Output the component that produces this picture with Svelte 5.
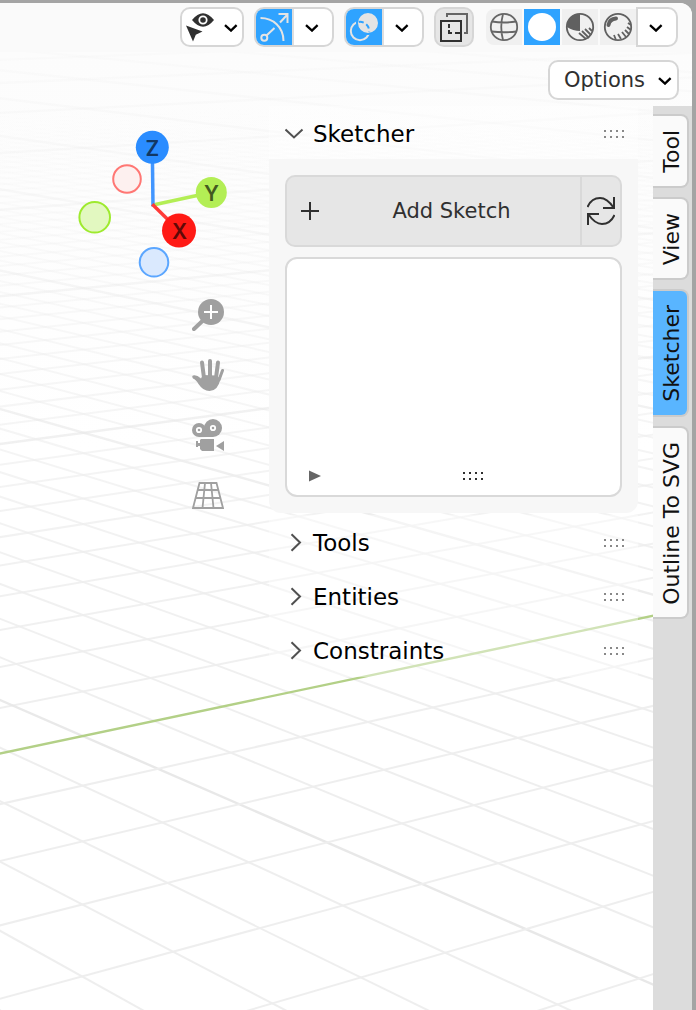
<script>
  // Projects a point of the ground plane (a, b in grid units) to the viewport.
  function project(a, b) {
    const w = 1 - 0.0185 * a - 0.0363 * b;
    return [(82.7 - 74.2 * a + 69.55 * b) / w, (736 + 1.7 * a + 4.9 * b) / w];
  }

  function segment(p, q, major, axis) {
    return { x1: p[0], y1: p[1], x2: q[0], y2: q[1], major, axis };
  }

  const lines = [];
  for (let i = -90; i <= 14; i++) {
    const major = i % 10 === 0;
    lines.push(segment(project(i, -300), project(i, (0.7 - 0.0185 * i) / 0.0363), major, false));
    lines.push(segment(project(-300, i), project((0.7 - 0.0363 * i) / 0.0185, i), major, i === 0));
  }
  lines.sort((m, n) => Number(m.axis) - Number(n.axis));

  let tabs = ['Tool', 'View', 'Sketcher', 'Outline To SVG'];
  let active = $state('Sketcher');
  let open = $state(true);
</script>

{#snippet chevron()}
  <svg class="chevron" width="14" height="8" viewBox="0 0 14 8"><path d="M1 1.2 7 6.600l5.600-5.400" fill="none" stroke="#000" stroke-width="2.300" /></svg>
{/snippet}

{#snippet grip()}
  <svg class="grip" width="20" height="8" viewBox="0 0 20 8">
    {#each [0, 6, 12, 18] as x}
      <path d="M{x} 0h2v2h-2zM{x} 6h2v2h-2z" />
    {/each}
  </svg>
{/snippet}

<div class="editor">
  <svg class="ground" aria-hidden="true">
    <defs>
      <linearGradient id="minor" gradientUnits="userSpaceOnUse" x1="0" y1="50" x2="0" y2="760">
        <stop offset="0.08" stop-color="#eee" stop-opacity="0" />
        <stop offset="0.25" stop-color="#eee" stop-opacity="0.22" />
        <stop offset="0.45" stop-color="#eee" stop-opacity="0.48" />
        <stop offset="0.7" stop-color="#eee" stop-opacity="0.8" />
        <stop offset="1" stop-color="#eee" />
      </linearGradient>
      <linearGradient id="major" gradientUnits="userSpaceOnUse" x1="0" y1="50" x2="0" y2="760">
        <stop offset="0" stop-color="#e8e8e8" stop-opacity="0.1" />
        <stop offset="0.3" stop-color="#e8e8e8" stop-opacity="0.35" />
        <stop offset="0.6" stop-color="#e8e8e8" stop-opacity="0.7" />
        <stop offset="1" stop-color="#e8e8e8" />
      </linearGradient>
    </defs>
    {#each lines as l}
      <line x1={l.x1} y1={l.y1} x2={l.x2} y2={l.y2} stroke={l.axis ? '#b3d087' : l.major ? 'url(#major)' : 'url(#minor)'} stroke-width={l.axis || l.major ? 2.4 : 2} />
    {/each}
  </svg>

  <header class="toolbar">
    <button class="box visibility" aria-label="Object types visibility">
      <svg width="32" height="32" viewBox="0 0 32 32">
        <path d="M8 9Q19-4.500 30 9 19 22.500 8 9z" fill="#303030" />
        <circle cx="19" cy="9" r="3.700" fill="#303030" stroke="#fff" stroke-width="1.800" />
        <circle cx="19" cy="9" r="1.200" fill="#303030" />
        <path d="M2 14.500 18.500 20.500 11.800 23.800 9 30.500z" fill="#303030" />
      </svg>
      {@render chevron()}
    </button>

    <div class="box split">
      <button class="cell on" aria-label="Show gizmos">
        <svg width="36" height="36" viewBox="0 0 36 36" fill="none" stroke="#e4e4e4" stroke-width="2">
          <path d="M4.500 9C17 9 27.500 18 27.500 32M10.500 26.500 18.500 19M24 13.500 31 6M22.500 5h9v9" />
          <circle cx="8.300" cy="28.700" r="3" />
        </svg>
      </button>
      <button class="cell drop" aria-label="Gizmo options">{@render chevron()}</button>
    </div>

    <div class="box split">
      <button class="cell on" aria-label="Show overlays">
        <svg width="36" height="36" viewBox="0 0 36 36" fill="none">
          <circle cx="14" cy="22" r="9.200" stroke="#e4e4e4" stroke-width="2" />
          <circle cx="22" cy="14" r="11" fill="#e4e4e4" stroke="#2fa3ff" stroke-width="2" />
          <path d="M12.800 12.900A9.200 9.200 0 0 1 23.100 23.200" stroke="#2fa3ff" stroke-width="2" stroke-dasharray="5 3" />
        </svg>
      </button>
      <button class="cell drop" aria-label="Overlay options">{@render chevron()}</button>
    </div>

    <button class="box xray" aria-label="Toggle X-ray">
      <svg width="36" height="36" viewBox="0 0 36 36" fill="none" stroke-width="2">
        <path d="M11 8V5h20v19h-3" stroke="#666" />
        <path d="M5 12h20v20H5z" stroke="#303030" />
        <path d="M13 15v4M13 21v3h3M19 24h5" stroke="#303030" />
      </svg>
    </button>

    <div class="shading">
      <button class="mode" aria-label="Wireframe">
        <svg width="36" height="36" viewBox="0 0 36 36" fill="none" stroke="#666" stroke-width="1.800">
          <circle cx="18" cy="18" r="13.200" />
          <path d="M17 5Q13.500 18 17 31M6 12.500q12 2 24 0M5.500 22.500q12.500 1.500 25 0" />
        </svg>
      </button>
      <button class="mode on" aria-label="Solid">
        <svg width="36" height="36" viewBox="0 0 36 36"><circle cx="18" cy="18" r="14" fill="#fff" /></svg>
      </button>
      <button class="mode" aria-label="Material preview">
        <svg width="36" height="36" viewBox="0 0 36 36" fill="none" stroke="#606060" stroke-width="1.800">
          <circle cx="18" cy="18" r="13.200" />
          <path d="M18 5v17Q11 22 5 18A13 13 0 0 1 18 5z" fill="#606060" stroke="none" />
          <path d="M17 24l7 6M20 22l7 7M23 20l6 6M27 19l3 3" />
        </svg>
      </button>
      <button class="mode" aria-label="Rendered">
        <svg width="36" height="36" viewBox="0 0 36 36" fill="none" stroke="#606060" stroke-width="1.800">
          <circle cx="18" cy="18" r="13.200" />
          <path d="M8.500 16Q9.500 10 16 9.500" stroke-width="4" stroke-linecap="round" />
          <path d="M28 14l3 2M27 18l4 3M25 21l4 4M22 23l4 5M18 25l3 5M14 26l2 5" />
        </svg>
      </button>
      <button class="more" aria-label="Shading options">{@render chevron()}</button>
    </div>
  </header>

  <div class="options-row">
    <button class="box options">Options {@render chevron()}</button>
  </div>

  <div class="workspace">
    <nav class="navigate" aria-label="View navigation">
      <svg class="axes" width="170" height="170" viewBox="0 0 170 170" stroke-width="3.500">
        <path d="M83 85 141 72.500" stroke="#b3ee55" />
        <path d="M83 86.500 82.300 27" stroke="#4296ff" />
        <path d="M82.300 84.300 109 110.500" stroke="#ff3b38" />
        <g stroke-width="2">
          <circle cx="57" cy="59" r="13.800" fill="#fdf0ef" stroke="#ff7774" />
          <circle cx="24.700" cy="97.300" r="15.300" fill="#e2f8c0" stroke="#9eea2e" />
          <circle cx="84" cy="142.300" r="14.300" fill="#dae9fe" stroke="#5ba6ff" />
        </g>
        <g stroke="none">
          <circle cx="82.300" cy="27.300" r="16.500" fill="#2a8cff" />
          <circle cx="141.300" cy="72.500" r="15.500" fill="#b3ee55" />
          <circle cx="109" cy="110.500" r="17" fill="#ff1a15" />
          <text x="82.300" y="35.500" fill="#123763">Z</text>
          <text x="141.500" y="80.500" fill="#435a20">Y</text>
          <text x="109.500" y="118.500" fill="#5f0907">X</text>
        </g>
      </svg>
      <button class="nav" aria-label="Zoom">
        <svg width="32" height="32" viewBox="0 0 32 32">
          <path d="M2 30 12 20.500" stroke="#a0a0a0" stroke-width="4" stroke-linecap="round" />
          <circle cx="19" cy="13" r="13" fill="#a0a0a0" />
          <path d="M12 13h14M19 6v14" stroke="#fff" stroke-width="2" />
        </svg>
      </button>
      <button class="nav" aria-label="Move view">
        <svg width="32" height="32" viewBox="0 0 32 32" fill="#a0a0a0" stroke="#a0a0a0" stroke-linecap="round">
          <path d="M10 3.500 12 19M18 2v16M26 3.500 24 19" stroke-width="4" />
          <path d="M30.500 11.500 27 21" stroke-width="3" />
          <path d="M1 16.500Q4.500 15.500 9 19.500l2-3.500 13 .500 4.500 3Q26 32 17.500 32 11 32 6.500 25 4 20.500 1 19.500-.500 17.500 1 16.500z" stroke="none" />
        </svg>
      </button>
      <button class="nav" aria-label="Camera view">
        <svg width="32" height="32" viewBox="0 0 32 32" fill="#a0a0a0">
          <circle cx="7" cy="11" r="7" /><circle cx="21" cy="9" r="9" /><path d="M7 11h14v7H7z" />
          <circle cx="7" cy="11" r="2.200" stroke="#fff" stroke-width="1.800" /><circle cx="21" cy="9" r="2.200" stroke="#fff" stroke-width="1.800" />
          <path d="M9 20h13v12H10l-2-2v-3H6v1H4v-6h2v2h2v-3zM24 27l8-5v10z" />
        </svg>
      </button>
      <button class="nav" aria-label="Toggle perspective">
        <svg width="32" height="32" viewBox="0 0 32 32" fill="none" stroke="#a0a0a0" stroke-width="1.800">
          <path d="M7.500 4h17L31 29H1zM5.500 11h21M3.500 19h25M13 4 10.500 29M19 4 21.500 29" />
        </svg>
      </button>
    </nav>

    <aside class="sidebar">
      <section>
        <h2 class="first">
          <button class="heading" aria-expanded={open} onclick={() => (open = !open)}>
            <svg width="20" height="20" viewBox="0 0 20 20"><path d="M.500 5.500 9 13.500l8.500-8" /></svg>
            <span>Sketcher</span>{@render grip()}
          </button>
        </h2>
        {#if open}
          <div class="body">
            <div class="actions">
              <button class="add">
                <svg width="18" height="18" viewBox="0 0 18 18"><path d="M0 9h18M9 0v18" stroke="#303030" stroke-width="2" /></svg>
                <span>Add Sketch</span>
              </button>
              <button class="refresh" aria-label="Update">
                <svg width="28" height="28" viewBox="0 0 28 28" fill="none" stroke="#303030" stroke-width="2">
                  <path d="M.500 10C4 2 9 1 13 1Q20 1 26.500 10.500M27 0v11H16M1 28V17h11M1.500 17.500Q8 27 15 27 23.500 27 27.500 18" />
                </svg>
              </button>
            </div>
            <div class="list">
              <div class="list-foot">
                <button class="filter" aria-label="Show filtering options">
                  <svg width="12" height="12" viewBox="0 0 12 12"><path d="M0 .500 12 6 0 11.500z" fill="#666" /></svg>
                </button>
                <div class="resize">{@render grip()}</div>
              </div>
            </div>
          </div>
        {/if}
      </section>
      {#each ['Tools', 'Entities', 'Constraints'] as title}
        <h2>
          <button class="heading" aria-expanded="false">
            <svg width="20" height="20" viewBox="0 0 20 20"><path d="M6.500 1.200 15 9.500l-8.500 8.300" /></svg>
            <span>{title}</span>{@render grip()}
          </button>
        </h2>
      {/each}
    </aside>

    <div class="tabs" role="tablist" aria-orientation="vertical">
      {#each tabs as tab}
        <button class="tab" class:active={tab === active} role="tab" aria-selected={tab === active} onclick={() => (active = tab)}>
          <span>{tab}</span>
        </button>
      {/each}
    </div>
  </div>
</div>

<style>
  :global(body) {
    margin: 0;
    background: #a4a4a4;
  }
  .editor {
    position: relative;
    display: flex;
    flex-direction: column;
    box-sizing: border-box;
    min-height: 100vh;
    border-top: 3px solid #a4a4a4;
    border-right: 4px solid #a4a4a4;
    background: #a4a4a4;
    font: 21px/28px 'DejaVu Sans', sans-serif;
    color: #303030;
    overflow: hidden;
  }
  .ground {
    position: absolute;
    top: -3px;
    left: 0;
    width: 100%;
    height: calc(100% + 3px);
    clip-path: inset(3px 0 0 0 round 0 12px 0 0);
    background: linear-gradient(#fcfcfc 50px, #fdfdfd 200px, #fff 450px);
  }
  .toolbar,
  .options-row,
  .workspace {
    position: relative;
    display: flex;
  }
  button {
    box-sizing: border-box;
    display: flex;
    align-items: center;
    margin: 0;
    padding: 0;
    border: 0;
    background: none;
    font: inherit;
    color: inherit;
  }
  svg {
    display: block;
    flex: none;
  }
  .toolbar {
    justify-content: flex-end;
    gap: 10px;
    padding: 4px 14px 5px;
    border-top-right-radius: 12px;
    background: #fafafa;
  }
  .box {
    box-sizing: border-box;
    height: 40px;
    border: 2px solid #d6d6d6;
    border-radius: 10px;
    background: #fff;
    overflow: hidden;
  }
  .visibility {
    gap: 8px;
    padding: 0 4px 0 2px;
  }
  .split {
    display: flex;
  }
  .cell {
    height: 36px;
  }
  .on {
    background: #2fa3ff;
  }
  .drop {
    justify-content: center;
    width: 40px;
    padding-right: 2px;
    border-left: 2px solid #dedede;
  }
  .chevron {
    margin-top: 2px;
  }
  .xray {
    background: #e6e6e6;
  }
  .shading {
    display: flex;
    align-items: center;
    gap: 2px;
    margin-left: 2px;
  }
  .mode:not(.on) {
    background: #f0f0f0;
  }
  .mode:first-child {
    border-radius: 8px 0 0 8px;
  }
  .more {
    justify-content: center;
    width: 42px;
    height: 40px;
    margin-left: -2px;
    padding-right: 2px;
    border: 2px solid #d6d6d6;
    border-radius: 0 10px 10px 0;
    background: #fff;
  }
  .options-row {
    justify-content: flex-end;
    padding: 8px 13px 6px;
  }
  .options {
    gap: 13px;
    padding: 0 5px 0 14px;
  }
  .workspace {
    flex: 1;
  }
  .navigate {
    display: flex;
    flex: 1;
    flex-direction: column;
    align-items: flex-end;
    gap: 28px;
    padding: 14px 45px 0 0;
  }
  .axes {
    margin: 0 -16px -19px 0;
  }
  .axes text {
    font: 600 21px Inter, sans-serif;
    text-anchor: middle;
  }
  .sidebar {
    flex: 0 1 369px;
    margin-right: 15px;
  }
  h2 {
    margin: 0;
    background: rgba(255, 255, 255, 0.4);
    font: inherit;
  }
  section {
    margin-bottom: 2px;
  }
  .heading {
    gap: 8px;
    width: 100%;
    height: 54px;
    padding: 2px 14px 0 16px;
    font-size: 23px;
    text-align: left;
    color: #000;
  }
  .first .heading {
    height: 53px;
  }
  .heading > svg {
    fill: none;
    stroke: #505050;
    stroke-width: 2;
  }
  .heading span {
    flex: 1;
  }
  .grip {
    fill: #303030;
  }
  .heading :global(.grip) {
    fill: #888;
    stroke: none;
  }
  .body {
    display: flex;
    flex-direction: column;
    gap: 10px;
    padding: 16px;
    border-radius: 0 0 12px 12px;
    background: #f7f7f7;
  }
  .actions {
    display: flex;
    box-sizing: border-box;
    height: 72px;
    border: 2px solid #d9d9d9;
    border-radius: 10px;
    background: #e6e6e6;
  }
  .add {
    flex: 1;
    gap: 4px;
    padding-left: 14px;
  }
  .add span {
    flex: 1;
    text-align: center;
  }
  .refresh {
    justify-content: center;
    width: 40px;
    border-left: 2px solid #d9d9d9;
  }
  .list {
    display: flex;
    flex-direction: column;
    justify-content: flex-end;
    box-sizing: border-box;
    height: 240px;
    border: 2px solid #d9d9d9;
    border-radius: 12px;
    background: #fff;
  }
  .list-foot {
    display: flex;
    height: 38px;
  }
  .filter {
    padding: 0 4px 0 22px;
  }
  .resize {
    display: flex;
    flex: 1;
    align-items: center;
    justify-content: center;
  }
  .tabs {
    display: flex;
    flex-direction: column;
    gap: 9px;
    width: 39px;
    padding-top: 8px;
    background: #dcdcdc;
  }
  .tab {
    justify-content: center;
    width: 36px;
    padding: 14px 0 13px 3px;
    border: 2px solid #cbcbcb;
    border-left: 0;
    border-radius: 0 8px 8px 0;
    background: #fafafa;
    font-size: 22px;
    color: #111;
  }
  .tab.active {
    background: #59b5ff;
  }
  .tab span {
    writing-mode: vertical-rl;
    transform: rotate(180deg);
    line-height: 28px;
    white-space: nowrap;
  }
</style>
